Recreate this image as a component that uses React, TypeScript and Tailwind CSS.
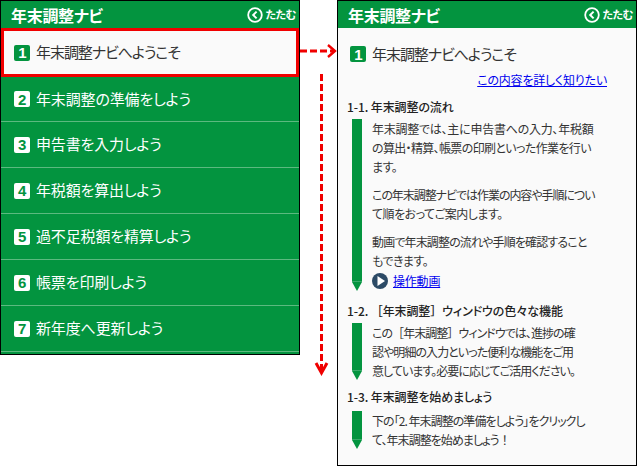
const font = { fontFamily: '"Noto Sans CJK JP", sans-serif' };

const NAV = [
  { t: "年末調整の準備をしよう", h: "h-[45px]" },
  { t: "申告書を入力しよう", h: "h-[46px]" },
  { t: "年税額を算出しよう", h: "h-[46px]" },
  { t: "過不足税額を精算しよう", h: "h-[46px]" },
  { t: "帳票を印刷しよう", h: "h-[46px]" },
  { t: "新年度へ更新しよう", h: "h-[46px]" },
];

function Header() {
  return (
    <div className="flex h-[27px] shrink-0 items-center justify-between bg-[#03943f] pl-[10px] pr-[3px] text-white">
      <span className="text-[16px] font-bold tracking-[-0.3px]">年末調整ナビ</span>
      <span className="flex items-center gap-[2px] text-[11px] font-bold tracking-[-0.5px]">
        <svg width="16" height="16" viewBox="0 0 16 16" fill="none" stroke="white" strokeWidth="1.8">
          <circle cx="8" cy="8" r="6.8" />
          <path d="M9.6 4.6 6.2 8l3.4 3.4" strokeWidth="2" />
        </svg>
        たたむ
      </span>
    </div>
  );
}

function Badge({ n, active }: { n: number; active?: boolean }) {
  return (
    <span className={`flex h-[16px] w-[16px] shrink-0 items-center justify-center rounded-[2px] text-[15px] font-bold leading-none ${active ? "bg-[#03943f] text-white" : "bg-white text-[#03943f]"}`} style={{ fontFamily: '"Liberation Sans", sans-serif' }}>
      {n}
    </span>
  );
}

function Pencil() {
  return (
    <div className="flex w-[10px] shrink-0 flex-col items-center">
      <div className="w-[10px] flex-1 bg-[#03943f]" />
      <div className="h-px w-[10px] bg-[#3aaa6a]" />
      <div className="h-0 w-0 border-x-[5px] border-t-[9px] border-x-transparent border-t-[#03943f]" />
    </div>
  );
}

function Wide({ c }: { c: string }) {
  return <span className="[font-feature-settings:normal]">{c}</span>;
}

function Section({ title, lines, children, mt, gap, track }: { title: React.ReactNode; lines: React.ReactNode[][]; children?: React.ReactNode; mt: string; gap: string; track: string }) {
  return (
    <section className={mt}>
      <h3 className="text-[12px] font-medium leading-[16px] tracking-[-0.1px] text-[#222]">{title}</h3>
      <div className={`${gap} flex gap-[10px] pl-[5px]`}>
        <Pencil />
        <div className={`text-[12px] leading-[19px] text-[#333] ${track}`}>
          {lines.map((group, i) => (
            <p key={i} className={i ? "mt-[9px]" : ""}>
              {group.map((l, j) => (
                <span key={j} className="block whitespace-nowrap">{l}</span>
              ))}
            </p>
          ))}
          {children}
        </div>
      </div>
    </section>
  );
}

export default function App() {
  return (
    <div className="relative flex h-[466px] w-[637px] items-start justify-between overflow-hidden bg-white [font-feature-settings:'palt']" style={font}>
      <div className="flex h-[355px] w-[300px] flex-col border border-black bg-[#03943f]">
        <Header />
        <div className="flex h-[49px] shrink-0 items-center gap-[6px] border-[3px] border-[#f00000] bg-[#fafafa] pl-[10px] text-[15px] tracking-[-1.05px] text-[#333]">
          <Badge n={1} active />
          年末調整ナビへようこそ
        </div>
        {NAV.map((item, i) => (
          <div key={item.t} className={`flex ${item.h} shrink-0 items-center gap-[6px] border-b border-[#5cb97f] pl-[13px] text-[15px] tracking-[-0.15px] text-white`}>
            <Badge n={i + 2} />
            {item.t}
          </div>
        ))}
      </div>

      <div className="flex h-[466px] w-[300px] flex-col border border-black bg-[#fafafa]">
        <Header />
        <div className="px-[9px]">
          <div className="mt-[16px] flex items-center gap-[6px] pl-[3px] text-[15px] leading-[20px] tracking-[-1.05px] text-[#333]">
            <Badge n={1} active />
            年末調整ナビへようこそ
          </div>
          <div className="mt-[8px] pr-[20px] text-right text-[12px] leading-[16px] tracking-[-0.2px]">
            <a className="text-[#0000ee] underline">この内容を詳しく知りたい</a>
          </div>
          <Section
            mt="mt-[11px]"
            gap="mt-[4px]"
            track="tracking-[-0.5px]"
            title="1-1. 年末調整の流れ"
            lines={[
              [
                <span className="tracking-[-0.25px]">年末調整では、主に申告書への入力、年税額</span>,
                <span className="tracking-[-0.65px]">の算出・精算、帳票の印刷といった作業を行い</span>,
                "ます。",
              ],
              [<span className="tracking-[-1.05px]">この年末調整ナビでは作業の内容や手順につい</span>, "て順をおってご案内します。"],
              [<span className="tracking-[-0.85px]">動画で年末調整の流れや手順を確認すること</span>, "もできます。"],
            ]}
          >
            <div className="flex h-[21px] items-center gap-[5px] tracking-[-0.2px]">
              <svg width="16" height="16" viewBox="0 0 16 16">
                <circle cx="8" cy="8" r="8" fill="#2c4a66" />
                <path d="M5.5 3 13 8l-7.5 5z" fill="white" />
              </svg>
              <a className="text-[#0000ee] underline">操作動画</a>
            </div>
          </Section>
          <Section
            mt="mt-[12px]"
            gap="mt-[4px]"
            track="tracking-[-0.95px]"
            title={<>1-2. <Wide c="［" />年末調整<Wide c="］" />ウィンドウの色々な機能</>}
            lines={[[<>この<Wide c="［" />年末調整<Wide c="］" />ウィンドウでは、進捗の確</>, "認や明細の入力といった便利な機能をご用", "意しています。必要に応じてご活用ください。"]]}
          />
          <Section
            mt="mt-[9px]"
            gap="mt-[6px]"
            track="tracking-[-0.95px]"
            title="1-3. 年末調整を始めましょう"
            lines={[["下の「2. 年末調整の準備をしよう」をクリックし", <>て、年末調整を始めましょう<Wide c="！" /></>]]}
          />
        </div>
      </div>

      {/* red dashed connectors overlaid between the panels */}
      <svg className="absolute left-[298px] top-[40px]" width="40" height="340" viewBox="0 0 40 340" fill="none" stroke="#f00000" strokeWidth="3">
        <path d="M2 11H36" strokeDasharray="7 3" />
        <path d="M30 5l7 6-7 6" strokeWidth="2.4" />
        <path d="M23.5 34V332" strokeDasharray="7 3" />
        <path d="M18 323l5.5 10 5.5-10" strokeWidth="3" />
      </svg>
    </div>
  );
}
